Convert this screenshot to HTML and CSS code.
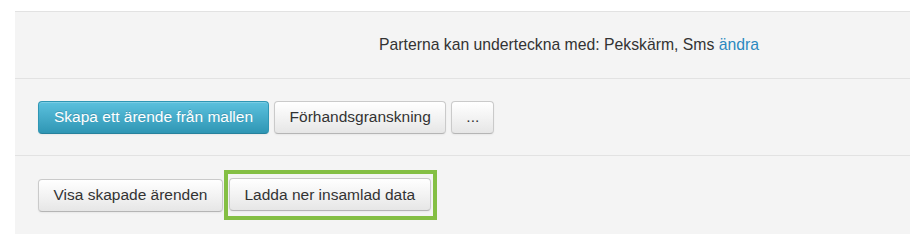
FILE: index.html
```html
<!DOCTYPE html>
<html lang="sv">
<head>
<meta charset="utf-8">
<title>Mall</title>
<link rel="stylesheet" href="styles.css">
</head>
<body>
<div class="panel">
  <div class="section section-info">
    <span class="info-text">Parterna kan underteckna med: Pekskärm, Sms <a class="link" href="#">ändra</a></span>
  </div>
  <div class="section section-actions">
    <button class="btn btn-info">Skapa ett ärende från mallen</button>
    <button class="btn">Förhandsgranskning</button>
    <button class="btn btn-more">...</button>
  </div>
  <div class="section section-data">
    <button class="btn">Visa skapade ärenden</button>
    <span class="highlight"><button class="btn">Ladda ner insamlad data</button></span>
  </div>
</div>
</body>
</html>
```

FILE: styles.css
```css
html, body {
  margin: 0;
  padding: 0;
  background: #ffffff;
  overflow: hidden;
}

body {
  font-family: "Liberation Sans", Arial, sans-serif;
  font-size: 15.5px;
  color: #333333;
}

.panel {
  margin: 11px 0 0 15px;
  background: #f4f4f4;
  border-top: 1px solid #e2e2e2;
}

.section {
  display: flex;
  align-items: center;
}

.section-info {
  height: 66px;
  padding-left: 364px;
  border-bottom: 1px solid #e2e2e2;
}

.info-text {
  font-size: 15.75px;
  color: #333333;
}

.link {
  color: #2a88c0;
  text-decoration: none;
}

.section-actions {
  height: 76px;
  padding-left: 23px;
  gap: 5px;
  border-bottom: 1px solid #e2e2e2;
}

.section-data {
  height: 78px;
  padding-left: 23px;
  gap: 1px;
}

.btn {
  font-family: inherit;
  font-size: 15.5px;
  height: 33px;
  padding: 0 14.5px;
  margin: 0;
  border: 1px solid #cacaca;
  border-bottom-color: #b5b5b5;
  border-radius: 4px;
  color: #333333;
  background: linear-gradient(to bottom, #ffffff 0%, #f3f3f3 50%, #e6e6e6 100%);
  box-shadow: inset 0 1px 0 rgba(255, 255, 255, 0.2), 0 1px 2px rgba(0, 0, 0, 0.05);
  cursor: pointer;
  white-space: nowrap;
}

.btn-info {
  padding: 0 15px;
  color: #ffffff;
  border-color: #2f96b4;
  border-bottom-color: #26819c;
  background: linear-gradient(to bottom, #5cc1de 0%, #2f96b4 100%);
  text-shadow: 0 -1px 0 rgba(0, 0, 0, 0.15);
}

.btn-more {
  padding: 0 14px;
}

.highlight {
  display: inline-flex;
  border: 4px solid #84bf44;
  padding: 4px 2px 5px 1px;
}
```
